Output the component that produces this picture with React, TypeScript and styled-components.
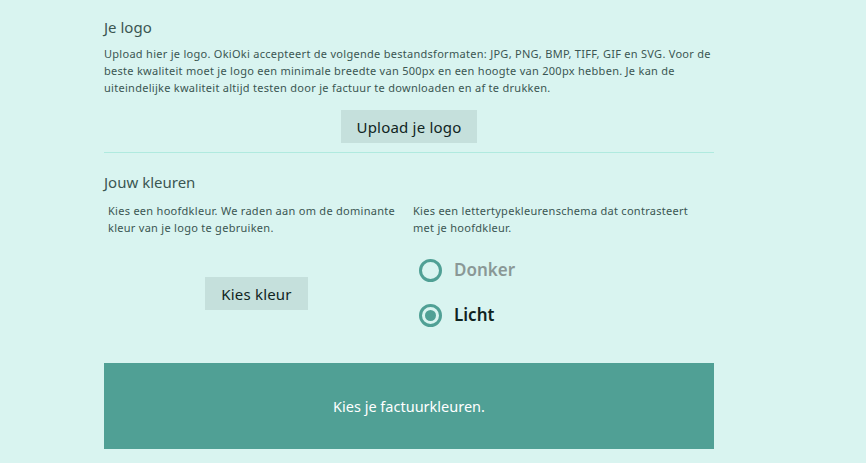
import * as React from 'react';
import styled, { createGlobalStyle } from 'styled-components';

const GlobalStyle = createGlobalStyle`
	html, body {
		margin: 0;
		padding: 0;
		background-color: #d9f4f0;
	}
	body {
		font-family: 'Noto Sans', 'Liberation Sans', sans-serif;
	}
`;

const App = () => {
	const [scheme, setScheme] = React.useState<'dark' | 'light'>('light');

	return (
		<Page>
			<GlobalStyle />
			<Column>
				<Section>
					<Title>Je logo</Title>
					<Text>
						Upload hier je logo. OkiOki accepteert de volgende bestandsformaten: JPG, PNG, BMP, TIFF, GIF en
						SVG. Voor de beste kwaliteit moet je logo een minimale breedte van 500px en een hoogte van 200px
						hebben. Je kan de uiteindelijke kwaliteit altijd testen door je factuur te downloaden en af te
						drukken.
					</Text>
					<ButtonRow>
						<Button>Upload je logo</Button>
					</ButtonRow>
				</Section>
				<Divider />
				<Section>
					<Title>Jouw kleuren</Title>
					<ColorGrid>
						<ColorCol>
							<Text>Kies een hoofdkleur. We raden aan om de dominante kleur van je logo te gebruiken.</Text>
							<PickArea>
								<Button>Kies kleur</Button>
							</PickArea>
						</ColorCol>
						<ColorCol>
							<Text>Kies een lettertypekleurenschema dat contrasteert met je hoofdkleur.</Text>
							<RadioList>
								<RadioLabel active={scheme === 'dark'} onClick={() => setScheme('dark')}>
									<RadioDot checked={scheme === 'dark'} />
									Donker
								</RadioLabel>
								<RadioLabel active={scheme === 'light'} onClick={() => setScheme('light')}>
									<RadioDot checked={scheme === 'light'} />
									Licht
								</RadioLabel>
							</RadioList>
						</ColorCol>
					</ColorGrid>
				</Section>
				<Preview>Kies je factuurkleuren.</Preview>
			</Column>
		</Page>
	);
};

export default App;

const accent = '#50a095';
const textColor = '#3b5652';

const Page = styled.div`
	min-height: 463px;
	background-color: #d9f4f0;
	padding: 17px 0 14px 104px;
	box-sizing: border-box;
`;

const Column = styled.div`
	width: 610px;
	display: flex;
	flex-direction: column;
`;

const Section = styled.div`
	display: flex;
	flex-direction: column;
`;

const Title = styled.h2`
	margin: 0 0 8px;
	font-size: 15px;
	font-weight: 400;
	line-height: 20px;
	color: ${textColor};
`;

const Text = styled.p`
	margin: 0;
	font-size: 11px;
	letter-spacing: 0.28px;
	line-height: 17px;
	color: ${textColor};
`;

const ButtonRow = styled.div`
	display: flex;
	justify-content: center;
	padding-top: 14px;
`;

const Button = styled.button`
	border: 0 none;
	background-color: #c5e0dc;
	color: #102523;
	font-family: 'Noto Sans', sans-serif;
	font-size: 15px;
	letter-spacing: 0.2px;
	height: 33px;
	padding: 0 16px;
	cursor: pointer;
`;

const Divider = styled.hr`
	margin: 9px 0 19px;
	border: 0 none;
	border-top: 1px solid #b0eadf;
`;

const ColorGrid = styled.div`
	display: grid;
	grid-template-columns: 305px 305px;
	padding-top: 2px;
`;

const ColorCol = styled.div`
	display: flex;
	flex-direction: column;
	padding: 0 4px;
`;

const PickArea = styled.div`
	display: flex;
	justify-content: center;
	padding-top: 41px;
`;

const RadioList = styled.div`
	display: flex;
	flex-direction: column;
	gap: 21px;
	padding: 22px 0 0 6px;
`;

const RadioLabel = styled.label<{ active: boolean }>`
	display: flex;
	align-items: center;
	gap: 12px;
	font-size: 17px;
	font-weight: 600;
	line-height: 24px;
	color: ${p => (p.active ? '#10231f' : '#8a9896')};
	cursor: pointer;
`;

const RadioDot = styled.span<{ checked: boolean }>`
	box-sizing: border-box;
	width: 23px;
	height: 23px;
	border-radius: 50%;
	border: 3px solid ${accent};
	display: flex;
	align-items: center;
	justify-content: center;
	&::after {
		content: '';
		display: ${p => (p.checked ? 'block' : 'none')};
		width: 11px;
		height: 11px;
		border-radius: 50%;
		background-color: ${accent};
	}
`;

const Preview = styled.div`
	margin-top: 36px;
	height: 86px;
	display: flex;
	align-items: center;
	justify-content: center;
	background-color: ${accent};
	color: #ffffff;
	font-size: 14.5px;
`;
